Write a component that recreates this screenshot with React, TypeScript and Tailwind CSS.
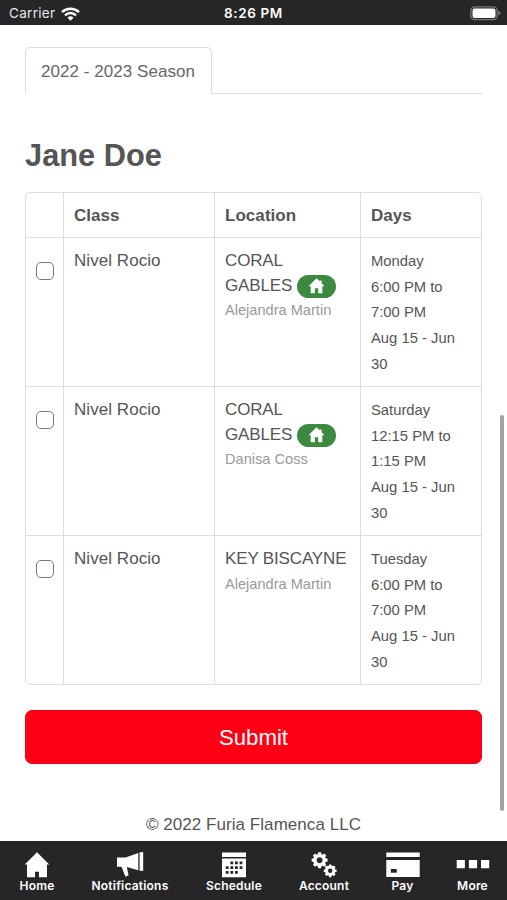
import { useState } from "react";

interface ClassRow {
  id: number;
  name: string;
  location: string;
  home: boolean;
  teacher: string;
  day: string;
  time: string;
  dates: string;
}

const rows: ClassRow[] = [
  {
    id: 1,
    name: "Nivel Rocio",
    location: "CORAL GABLES",
    home: true,
    teacher: "Alejandra Martin",
    day: "Monday",
    time: "6:00 PM to 7:00 PM",
    dates: "Aug 15 - Jun 30",
  },
  {
    id: 2,
    name: "Nivel Rocio",
    location: "CORAL GABLES",
    home: true,
    teacher: "Danisa Coss",
    day: "Saturday",
    time: "12:15 PM to 1:15 PM",
    dates: "Aug 15 - Jun 30",
  },
  {
    id: 3,
    name: "Nivel Rocio",
    location: "KEY BISCAYNE",
    home: false,
    teacher: "Alejandra Martin",
    day: "Tuesday",
    time: "6:00 PM to 7:00 PM",
    dates: "Aug 15 - Jun 30",
  },
];

const HomeBadge = () => (
  <span className="inline-flex h-[23px] w-[39px] items-center justify-center rounded-full bg-[#3c8a40] align-middle">
    <svg width="17" height="16" viewBox="0 0 17 16" fill="#fff">
      <path d="M8.5 0.3 L11.6 3.3 V2.6 H13.6 V5.3 L16.5 8.3 H14.3 V15.2 H10.2 V10.2 H6.8 V15.2 H2.7 V8.3 H0.5 Z" />
    </svg>
  </span>
);

const HomeIcon = () => (
  <svg width="26" height="26" viewBox="0 0 26 26" fill="#fff">
    <path d="M13 0.3 L25.3 12.4 H23 V25.2 H15 V19.8 H11 V25.2 H3 V12.4 H0.7 Z" />
  </svg>
);

const MegaphoneIcon = () => (
  <svg width="28" height="26" viewBox="0 0 28 26" fill="#fff">
    <path d="M1 5.6 H9.5 L22.3 0.9 V18.3 L10.8 15.1 L12.6 23.2 L9.4 24.8 L5.6 14.7 H1 Z" />
    <path d="M23.6 0.2 H27.2 V18.8 H23.6 Z" />
  </svg>
);

const CalendarIcon = () => (
  <svg width="26" height="26" viewBox="0 0 26 26">
    <path fill="#fff" d="M1 0.4 H25 V5 H1 Z M1 6.6 H25 V25.2 H1 Z" />
    <g fill="#262626">
      <path d="M9.4 9.5h2.8v2.8h-2.8z M14 9.5h2.8v2.8H14z M18.6 9.5h2.8v2.8h-2.8z" />
      <path d="M4.8 14.2h2.8V17H4.8z M9.4 14.2h2.8V17H9.4z M14 14.2h2.8V17H14z M18.6 14.2h2.8V17h-2.8z" />
      <path d="M4.8 18.9h2.8v2.8H4.8z M9.4 18.9h2.8v2.8H9.4z M14 18.9h2.8v2.8H14z" />
    </g>
  </svg>
);

const teeth = [0, 45, 90, 135, 180, 225, 270, 315];

const GearsIcon = () => (
  <svg width="26" height="26" viewBox="0 0 26 26">
    <g transform="translate(8.6 8.2)">
      {teeth.map((angle) => (
        <path key={angle} d="M-2.1 -5 L-1.4 -8 H1.4 L2.1 -5 Z" fill="#fff" transform={`rotate(${angle})`} />
      ))}
      <circle r="4.6" fill="none" stroke="#fff" strokeWidth="3.3" />
    </g>
    <g transform="translate(19.2 18.8)">
      {teeth.map((angle) => (
        <path key={angle} d="M-1.7 -4 L-1.1 -6.4 H1.1 L1.7 -4 Z" fill="#fff" transform={`rotate(${angle})`} />
      ))}
      <circle r="3.6" fill="none" stroke="#fff" strokeWidth="2.8" />
    </g>
  </svg>
);

const CardIcon = () => (
  <svg width="34" height="26" viewBox="0 0 34 26">
    <path fill="#fff" d="M0.3 0.4 H33.7 V4.9 H0.3 Z M0.3 8 H33.7 V25 H0.3 Z" />
    <path fill="#262626" d="M4.8 17 H10.8 V20.7 H4.8 Z" />
  </svg>
);

const MoreIcon = () => (
  <svg width="34" height="26" viewBox="0 0 34 26" fill="#fff">
    <path d="M0.7 8 H8.9 V16.2 H0.7 Z M12.9 8 H21.1 V16.2 H12.9 Z M25 8 H33.2 V16.2 H25 Z" />
  </svg>
);

const tabs = [
  { label: "Home", width: "w-[74px]", icon: <HomeIcon /> },
  { label: "Notifications", width: "w-[112px]", icon: <MegaphoneIcon /> },
  { label: "Schedule", width: "w-24", icon: <CalendarIcon /> },
  { label: "Account", width: "w-[84px]", icon: <GearsIcon /> },
  { label: "Pay", width: "w-[73px]", icon: <CardIcon /> },
  { label: "More", width: "w-[67px]", icon: <MoreIcon /> },
];

const StatusBar = () => (
  <header className="grid h-[25px] grid-cols-3 items-center bg-[#262626] px-[6px] pt-[2px] font-['Inter',sans-serif] text-[13.5px] leading-none text-white">
    <div className="flex items-center gap-[6px] pl-[3px]">
      <span className="tracking-[0.3px] text-gray-200">Carrier</span>
      <svg width="19" height="14" viewBox="0 0 19 14" fill="none" stroke="#fff" strokeWidth="2.5">
        <path d="M1 5.1 A12.3 12.3 0 0 1 18 5.1" />
        <path d="M4 8.3 A7.9 7.9 0 0 1 15 8.3" />
        <path d="M9.5 13.8 L6.5 10.7 A4.3 4.3 0 0 1 12.5 10.7 Z" fill="#fff" stroke="none" />
      </svg>
    </div>
    <span className="text-center font-semibold tracking-[0.6px]">8:26 PM</span>
    <div className="flex justify-end">
      <svg width="31" height="15" viewBox="0 0 31 15">
        <rect x="0.8" y="0.8" width="26.4" height="12.8" rx="4" fill="none" stroke="#777" strokeWidth="1.3" />
        <rect x="2.5" y="2.5" width="23" height="9.4" rx="2.2" fill="#fff" />
        <path d="M28.4 5 Q30.4 5.6 30.4 7.2 Q30.4 8.8 28.4 9.4 Z" fill="#777" />
      </svg>
    </div>
  </header>
);

const App: React.FC = () => {
  const [selected, setSelected] = useState<number[]>([]);

  const toggle = (id: number) => {
    setSelected((prev) =>
      prev.includes(id) ? prev.filter((x) => x !== id) : [...prev, id]
    );
  };

  return (
    <div className="relative flex h-[900px] w-[507px] flex-col overflow-hidden bg-white font-['Liberation_Sans',Arial,sans-serif] text-[17px] text-[#555]">
      <StatusBar />

      <main className="flex-1 px-[25px] pt-[22px]">
        {/* Season tab */}
        <div className="flex h-[47px]">
          <div className="w-[187px] rounded-t-[5px] border border-b-0 border-[#ddd] pt-3 pl-[15px] leading-6 tracking-[0.05px] whitespace-nowrap text-[#666]">
            2022 - 2023 Season
          </div>
          <div className="flex-1 border-b border-[#ddd]" />
        </div>

        <h1 className="mt-[44px] text-[30.8px] leading-[36px] font-bold text-[#555]">
          Jane Doe
        </h1>

        {/* Classes */}
        <div className="mt-[18px] overflow-hidden rounded-[5px] border border-[#ddd]">
          <div className="grid h-[44px] grid-cols-[38px_151px_146px_1fr] divide-x divide-[#ddd] leading-[45px] font-bold">
            <div />
            <div className="pl-[10px]">Class</div>
            <div className="pl-[10px] tracking-[0.05px]">Location</div>
            <div className="pl-[10px]">Days</div>
          </div>
          {rows.map((row) => (
            <div
              key={row.id}
              className="grid h-[149px] grid-cols-[38px_151px_146px_1fr] divide-x divide-[#ddd] border-t border-[#ddd]"
            >
              <div className="pt-[24px] pl-[10px]">
                <input
                  type="checkbox"
                  aria-label={row.name}
                  checked={selected.includes(row.id)}
                  onChange={() => toggle(row.id)}
                  className="block size-[18px] appearance-none rounded-[5px] border-[1.5px] border-[#777] bg-white checked:bg-[#3c8a40]"
                />
              </div>
              <div className="pt-[11px] pl-[10px] leading-6 tracking-[0.05px]">
                {row.name}
              </div>
              <div className="pt-[11px] pr-[10px] pl-[10px]">
                <p className="leading-[24.5px] tracking-[-0.15px]">
                  {row.location} {row.home && <HomeBadge />}
                </p>
                <p className="text-[14.6px] leading-[25px] text-[#999]">
                  {row.teacher}
                </p>
              </div>
              <div className="pt-[11px] pr-[10px] pl-[10px] text-[14.8px] leading-[25.7px]">
                <p>{row.day}</p>
                <p>{row.time}</p>
                <p>{row.dates}</p>
              </div>
            </div>
          ))}
        </div>

        <button className="mt-[25px] block h-[54px] w-full rounded-[7px] border border-[#e20a20] bg-[#ff0014] pt-[2px] text-[22.2px] text-white">
          Submit
        </button>

        <p className="mt-[49px] text-center leading-6 tracking-[0.05px]">
          © 2022 Furia Flamenca LLC
        </p>
      </main>

      {/* Scroll indicator */}
      <div className="absolute top-[415px] right-[3px] h-[396px] w-[4px] rounded-full bg-[#a3a3a3]" />

      <nav className="flex h-[59px] bg-[#262626] font-['Inter',sans-serif] text-white">
        {tabs.map((tab) => (
          <a
            key={tab.label}
            href="#"
            className={`flex flex-col items-center pt-[11px] ${tab.width}`}
          >
            {tab.icon}
            <span className="mt-[1px] text-[12px] leading-[14px] font-semibold tracking-[0.2px]">
              {tab.label}
            </span>
          </a>
        ))}
      </nav>
    </div>
  );
};

export default App;
